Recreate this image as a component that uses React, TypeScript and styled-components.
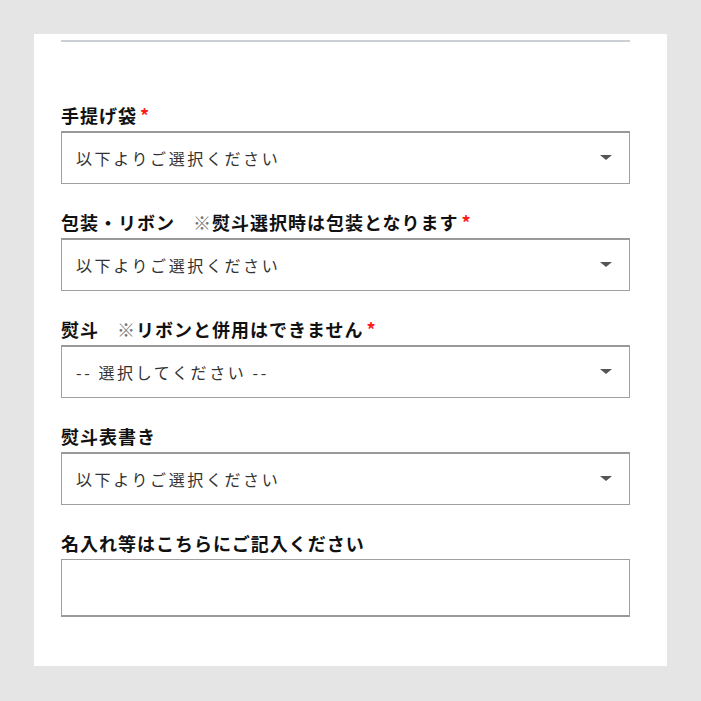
import React from "react";
import styled, { createGlobalStyle } from "styled-components";

const GlobalStyle = createGlobalStyle`
    html, body {
        margin: 0;
        padding: 0;
        background: #e5e5e5;
    }
    body {
        font-family: "Noto Sans CJK JP", "Noto Sans", sans-serif;
        color: #111;
    }
`;

type Field = {
    label: string;
    note?: string;
    required?: boolean;
    placeholder?: string;
    multiline?: boolean;
};

const fields: Field[] = [
    { label: "手提げ袋", required: true, placeholder: "以下よりご選択ください" },
    {
        label: "包装・リボン",
        note: "※熨斗選択時は包装となります",
        required: true,
        placeholder: "以下よりご選択ください",
    },
    {
        label: "熨斗",
        note: "※リボンと併用はできません",
        required: true,
        placeholder: "-- 選択してください --",
    },
    { label: "熨斗表書き", placeholder: "以下よりご選択ください" },
    { label: "名入れ等はこちらにご記入ください", multiline: true },
];

const App: React.FC = () => {
    return (
        <Page>
            <GlobalStyle />
            <Panel>
                <Rule />
                <Form>
                    {fields.map((field) => (
                        <FieldGroup key={field.label}>
                            <Label>
                                {field.label}
                                {field.note && (
                                    <>
                                        <Gap />
                                        <Mark>※</Mark>
                                        {field.note.slice(1)}
                                    </>
                                )}
                                {field.required && <Required>*</Required>}
                            </Label>
                            {field.multiline ? (
                                <TextArea />
                            ) : (
                                <SelectBox>
                                    <Select defaultValue="">
                                        <option value="">{field.placeholder}</option>
                                    </Select>
                                    <Arrow viewBox="0 0 12 5" aria-hidden>
                                        <path d="M0 0 H12 L6 5 Z" fill="#555" />
                                    </Arrow>
                                </SelectBox>
                            )}
                        </FieldGroup>
                    ))}
                </Form>
            </Panel>
        </Page>
    );
};

export default App;

const Page = styled.div`
    width: 701px;
    height: 701px;
    padding: 34px;
    box-sizing: border-box;
`;

const Panel = styled.div`
    width: 633px;
    height: 632px;
    background: #fff;
    padding: 6px 37px 0 27px;
    box-sizing: border-box;
`;

const Rule = styled.div`
    height: 2px;
    background: #ccd0d4;
`;

const Form = styled.div`
    display: flex;
    flex-direction: column;
    gap: 26px;
    margin-top: 61px;
`;

const FieldGroup = styled.div`
    display: flex;
    flex-direction: column;
    gap: 4px;
`;

const Label = styled.div`
    display: flex;
    align-items: center;
    height: 24px;
    font-size: 18px;
    font-weight: 700;
    letter-spacing: 1px;
    color: #111;
    white-space: nowrap;
`;

const Gap = styled.span`
    display: inline-block;
    width: 18px;
`;

const Mark = styled.span`
    font-weight: 400;
    color: #777;
`;

const Required = styled.span`
    color: #ff1a1a;
    margin-left: 3px;
    font-size: 18px;
`;

const SelectBox = styled.div`
    position: relative;
    height: 53px;
`;

const Select = styled.select`
    appearance: none;
    width: 100%;
    height: 100%;
    margin: 0;
    padding: 0 40px 0 14px;
    box-sizing: border-box;
    border: 1px solid #a0a0a0;
    border-top: 2px solid #999;
    border-radius: 0;
    background: #fff;
    font-family: "Noto Sans CJK JP", "Noto Sans", sans-serif;
    font-size: 16px;
    letter-spacing: 2.6px;
    color: #333;
    outline: none;
`;

const Arrow = styled.svg`
    position: absolute;
    right: 18px;
    top: 24px;
    width: 12px;
    height: 5px;
    pointer-events: none;
`;

const TextArea = styled.textarea`
    display: block;
    width: 100%;
    height: 58px;
    margin: 0;
    padding: 8px 14px;
    box-sizing: border-box;
    border: 1px solid #a0a0a0;
    border-bottom: 2px solid #999;
    border-radius: 0;
    resize: none;
    font-family: "Noto Sans CJK JP", "Noto Sans", sans-serif;
    font-size: 16px;
    outline: none;
`;
